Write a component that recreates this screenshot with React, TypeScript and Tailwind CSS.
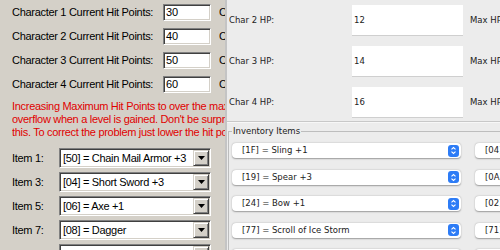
import React from "react";

const winFont = { fontFamily: '"Liberation Sans", Arial, sans-serif' };
const macFont = { fontFamily: '"DejaVu Sans", "Liberation Sans", sans-serif' };

const hitPoints = ["30", "40", "50", "60"];

const winItems = [
  { label: "Item 1:", value: "[50] = Chain Mail Armor +3" },
  { label: "Item 3:", value: "[04] = Short Sword +3" },
  { label: "Item 5:", value: "[06] = Axe +1" },
  { label: "Item 7:", value: "[08] = Dagger" },
  { label: "Item 9:", value: "" },
];

const charHp = [
  { label: "Char 2 HP:", value: "12" },
  { label: "Char 3 HP:", value: "14" },
  { label: "Char 4 HP:", value: "16" },
];

const inventory = [
  ["[1F] = Sling +1", "[04] = Short Sword +3"],
  ["[19] = Spear +3", "[0A] = Long Sword"],
  ["[24] = Bow +1", "[02] = Mace"],
  ["[77] = Scroll of Ice Storm", "[71] = Scroll"],
  ["", ""],
];

function WinCombo({ value }: { value: string }) {
  return (
    <div className="flex h-[20px] w-[152px] shrink-0 items-center border border-t-[#808080] border-l-[#808080] border-b-white border-r-white bg-white shadow-[inset_1px_1px_0_#404040,inset_-1px_-1px_0_#d4d0c8]">
      <span className="flex-1 truncate pl-[3px] text-[11px] tracking-[-0.3px] text-black">
        {value}
      </span>
      <div className="mr-[1px] flex h-[16px] w-[16px] items-center justify-center border border-t-[#d4d0c8] border-l-[#d4d0c8] border-b-[#404040] border-r-[#404040] bg-[#d4d0c8] shadow-[inset_1px_1px_0_#fff,inset_-1px_-1px_0_#808080]">
        <svg width="7" height="4" viewBox="0 0 7 4">
          <path d="M0 0h7L3.5 4z" fill="#000" />
        </svg>
      </div>
    </div>
  );
}

function MacPopup({ value }: { value: string }) {
  return (
    <div className="flex h-[15px] w-[229px] shrink-0 items-center rounded-[4px] bg-white pl-[10px] pr-[2px] shadow-[0_0.5px_1.5px_rgba(0,0,0,0.35)]">
      <span className="flex-1 truncate text-[8.5px] text-[#222]">{value}</span>
      <div className="flex h-[12px] w-[11px] flex-col items-center justify-center rounded-[3px] bg-[#2d7cf6]">
        <svg width="7" height="9" viewBox="0 0 7 9">
          <path
            d="M1.5 3.3L3.5 1.5L5.5 3.3M1.5 5.7L3.5 7.5L5.5 5.7"
            stroke="#fff"
            strokeWidth="1.1"
            fill="none"
          />
        </svg>
      </div>
    </div>
  );
}

export default function App() {
  return (
    <div className="flex h-[250px] w-[500px] overflow-hidden bg-[#ececec]">
      {/* old windows form */}
      <div
        className="flex w-[225px] shrink-0 flex-col overflow-hidden bg-[#d4d0c8] pl-[12px] pt-[4px]"
        style={winFont}
      >
        <div className="flex shrink-0 flex-col gap-[7px]">
          {hitPoints.map((hp, i) => (
            <div key={i} className="flex h-[17px] shrink-0 items-center overflow-hidden whitespace-nowrap">
              <span className="w-[151px] shrink-0 text-[11px] tracking-[-0.3px] text-black">
                Character {i + 1} Current Hit Points:
              </span>
              <div className="flex h-[17px] w-[48px] shrink-0 items-center border border-t-[#808080] border-l-[#808080] border-b-white border-r-white bg-white pl-[2px] text-[11px] text-black shadow-[inset_1px_1px_0_#404040,inset_-1px_-1px_0_#d4d0c8]">
                {hp}
              </div>
              <span className="ml-[8px] min-w-0 overflow-hidden text-[11px] tracking-[-0.3px] text-black">
                Character {i + 1} Maximum Hit Points:
              </span>
            </div>
          ))}
        </div>
        <div className="mt-[7px] shrink-0 overflow-hidden whitespace-nowrap text-[11px] leading-[13px] tracking-[-0.3px] text-[#e00000]">
          <div className="overflow-hidden">Increasing Maximum Hit Points to over the maximum can cause an</div>
          <div className="overflow-hidden">overflow when a level is gained. Don't be surprised if you see</div>
          <div className="overflow-hidden">this. To correct the problem just lower the hit points.</div>
        </div>
        <div className="mt-[9px] flex shrink-0 flex-col gap-[4px]">
          {winItems.map((it, i) => (
            <div key={i} className="flex shrink-0 items-center whitespace-nowrap">
              <span className="w-[47px] shrink-0 text-[11px] tracking-[-0.3px] text-black">
                {it.label}
              </span>
              <WinCombo value={it.value} />
            </div>
          ))}
        </div>
      </div>

      {/* mac panel */}
      <div
        className="flex flex-1 flex-col overflow-hidden border-l-2 border-l-[#c4c4c4] bg-[#ececec]"
        style={macFont}
      >
        <div className="flex shrink-0 flex-col gap-[10px] pl-[2px] pt-[5px]">
          {charHp.map((c) => (
            <div key={c.label} className="flex shrink-0 items-center overflow-hidden whitespace-nowrap">
              <span className="w-[123px] shrink-0 text-[8.5px] text-[#222]">
                {c.label}
              </span>
              <div className="flex h-[31px] w-[111px] shrink-0 items-center border-b border-b-[#cfcfcf] bg-white pl-[2px] text-[8.5px] text-[#222]">
                {c.value}
              </div>
              <span className="ml-[7px] min-w-0 overflow-hidden text-[8.5px] text-[#222]">Max HP:</span>
            </div>
          ))}
        </div>
        <div className="mt-[3px] h-[2px] shrink-0 border-t border-t-[#c8c8c8] bg-[#f7f7f7]" />
        <div className="mt-[8px] ml-[1px] flex shrink-0 flex-col border-l border-t border-[#bdbdbd]">
          <span className="-mt-[7px] ml-[3px] w-fit bg-[#ececec] px-[1px] text-[8.5px] leading-[12px] text-[#222]">
            Inventory Items
          </span>
          <div className="mt-[6px] grid grid-cols-[229px_229px] gap-x-[14px] gap-y-[11.5px] pl-[3px]">
            {inventory.map((row, i) =>
              row.map((v, j) => <MacPopup key={`${i}-${j}`} value={v} />)
            )}
          </div>
        </div>
      </div>
    </div>
  );
}
